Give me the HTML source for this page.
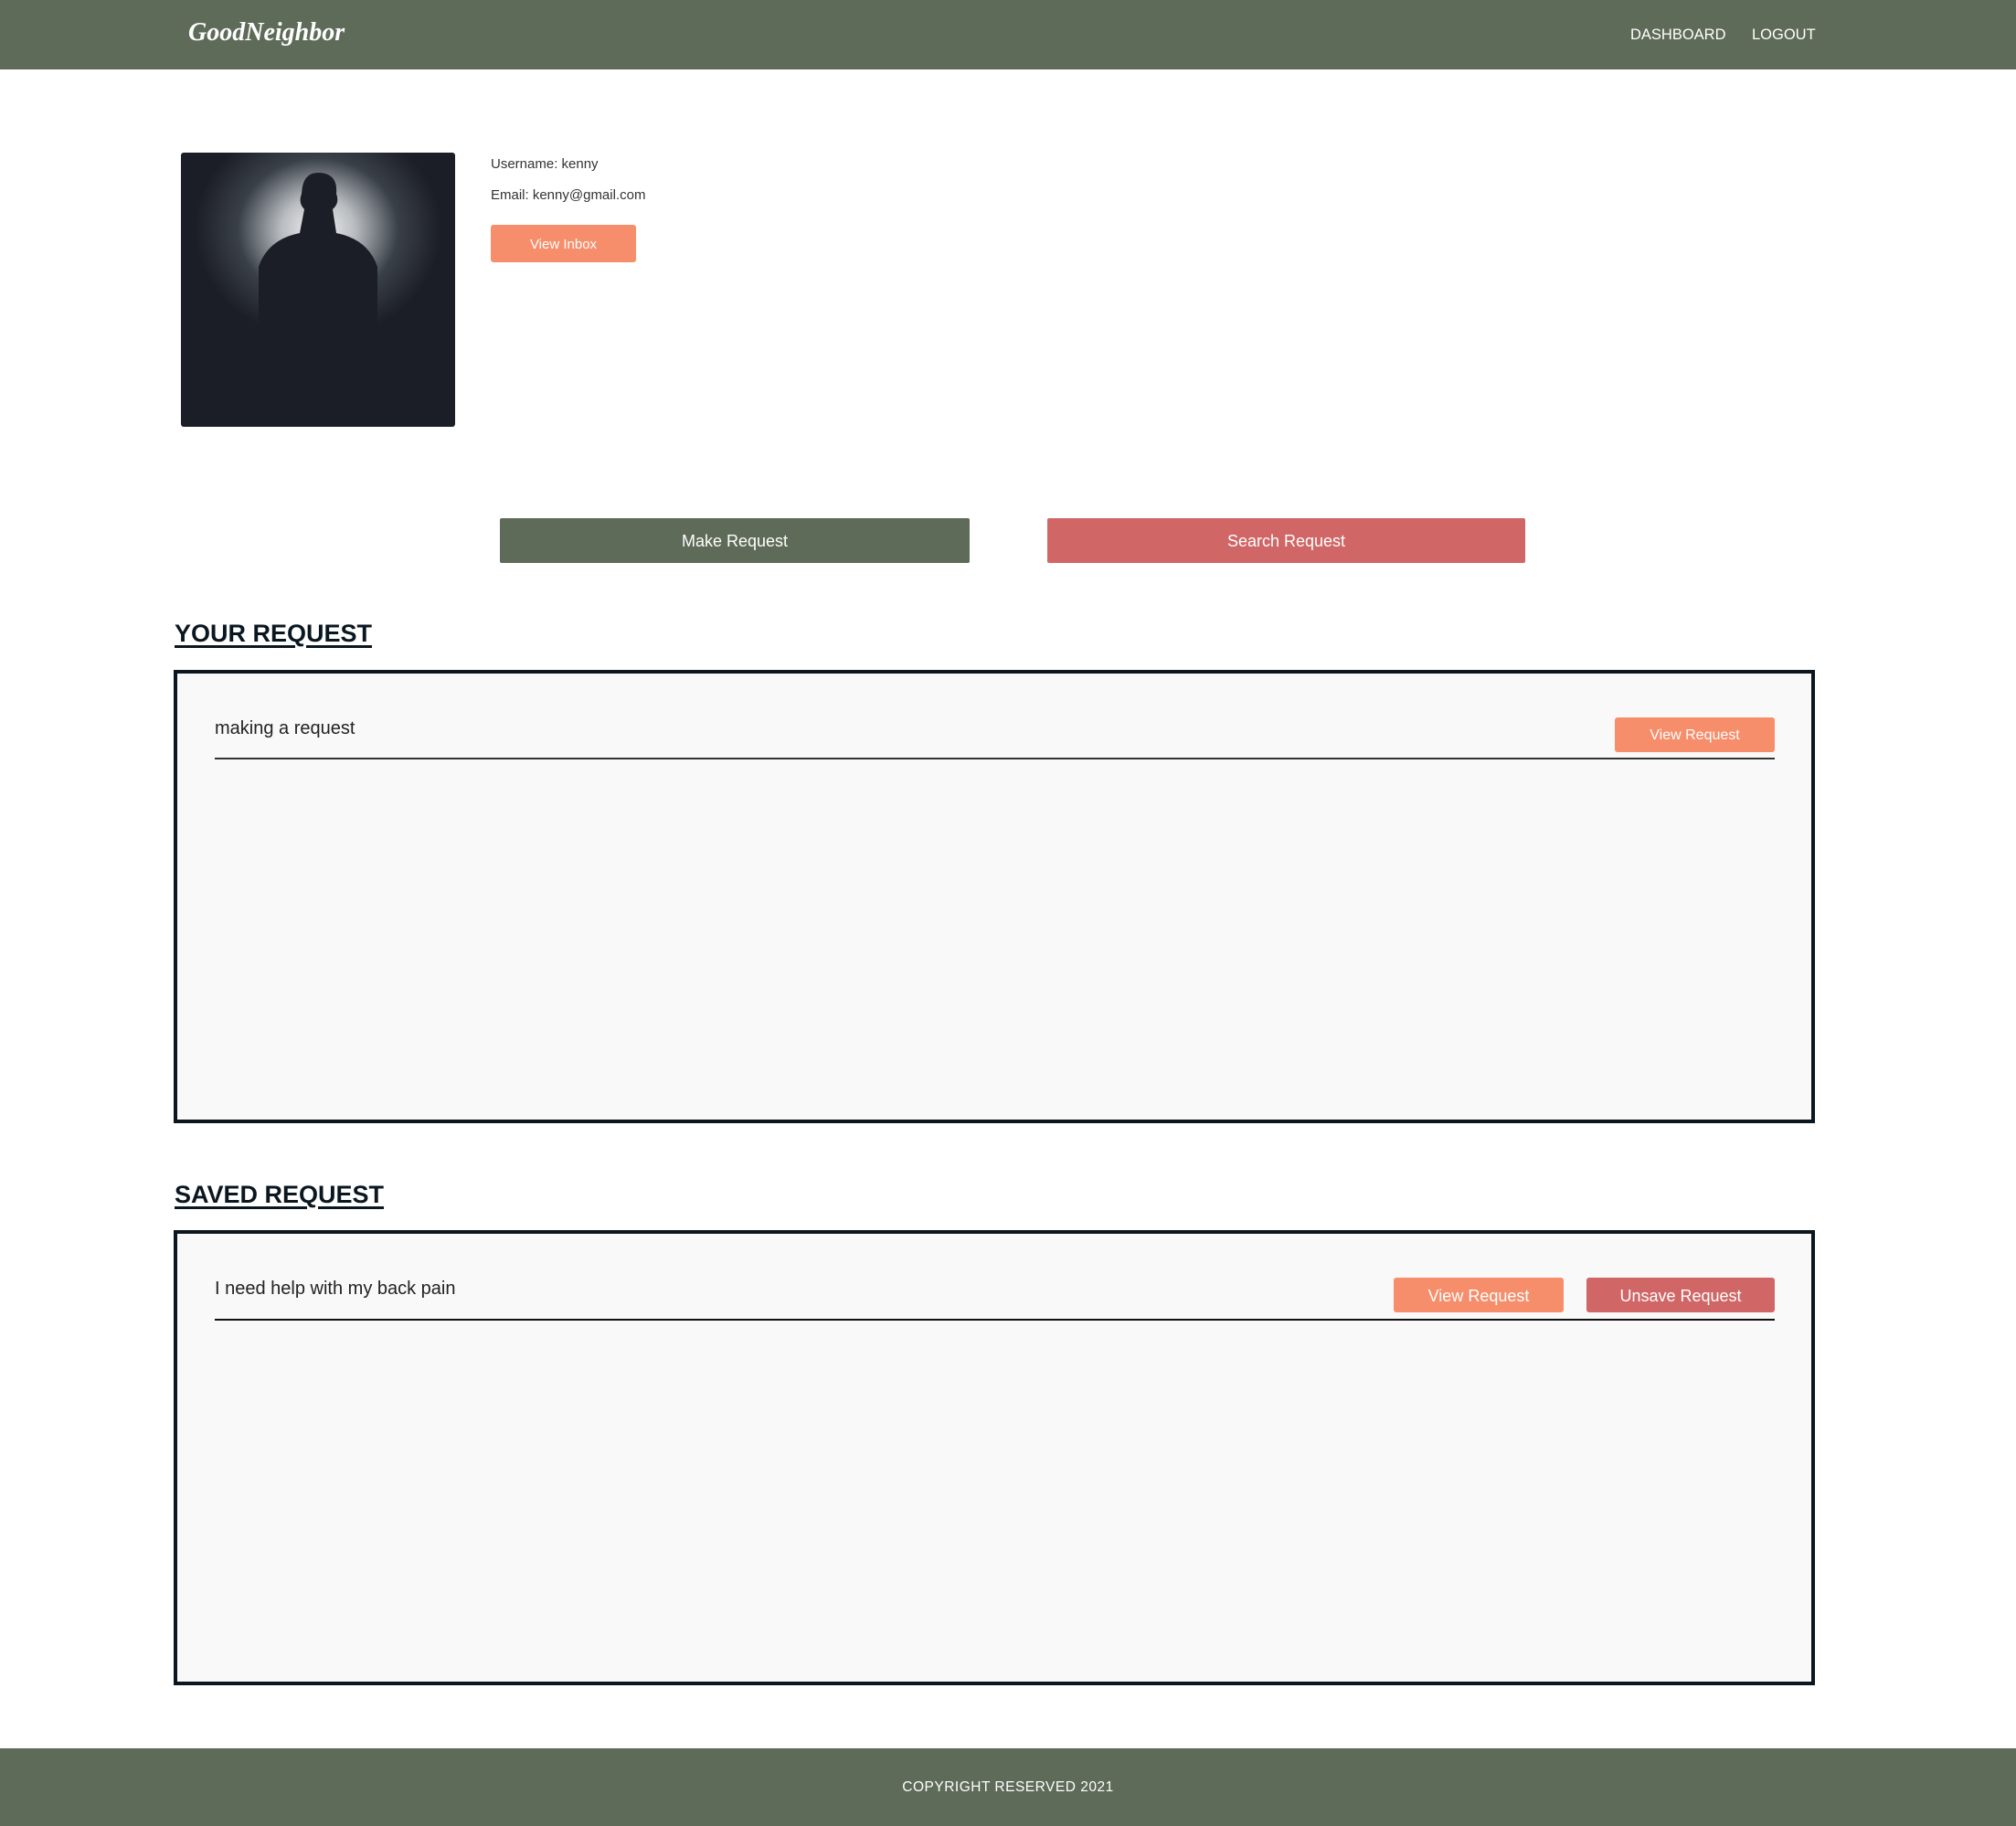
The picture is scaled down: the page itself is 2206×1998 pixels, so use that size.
<!DOCTYPE html>
<html><head><meta charset="utf-8"><style>
*{margin:0;padding:0;box-sizing:border-box}
body{width:2206px;height:1998px;position:relative;background:#fff;font-family:"Liberation Sans",sans-serif;overflow:hidden}
.a{position:absolute}
.nav{left:0;top:0;width:2206px;height:76px;background:#5f6b59}
.btn{position:absolute;color:#fff;text-align:center;border-radius:3px}
.h{font-weight:bold;font-size:27px;color:#0b1720;text-decoration:underline;text-decoration-thickness:3px;text-underline-offset:4px}
.box{border:4px solid #0b1720;background:#f9f9f9}
</style></head><body>
<div class="a nav"></div>
<div class="a" style="left:206px;top:20px;font-family:'Liberation Serif',serif;font-style:italic;font-weight:bold;font-size:28px;color:#fff">GoodNeighbor</div>
<div class="a" style="left:1784px;top:29px;font-size:16.5px;color:#fff">DASHBOARD</div>
<div class="a" style="left:1917px;top:29px;font-size:16.5px;color:#fff">LOGOUT</div>

<div class="a" style="left:198px;top:167px;width:300px;height:300px;border-radius:3px;overflow:hidden;background:radial-gradient(ellipse 45% 40% at 50% 28%,#f4f4f4 0%,#b8bcc0 30%,#3a4048 65%,#1b1d27 100%)">
<svg width="300" height="300" viewBox="0 0 300 300"><path d="M85 300 L85 125 Q95 95 130 88 L135 62 Q128 55 132 45 Q133 22 150 22 Q172 22 170 45 Q174 55 166 62 L170 88 Q205 95 215 125 L215 300 Z" fill="#1b1d27"/></svg>
</div>
<div class="a" style="left:537px;top:171px;font-size:15px;color:#333">Username: kenny</div>
<div class="a" style="left:537px;top:205px;font-size:15px;color:#333">Email: kenny@gmail.com</div>
<div class="btn" style="left:537px;top:246px;width:159px;height:41px;line-height:43px;background:#f78e6b;font-size:15px">View Inbox</div>

<div class="btn" style="left:547px;top:567px;width:514px;height:49px;line-height:51px;background:#5f6b59;font-size:18px;border-radius:2px">Make Request</div>
<div class="btn" style="left:1146px;top:567px;width:523px;height:49px;line-height:51px;background:#d06666;font-size:18px;border-radius:2px">Search Request</div>

<div class="a h" style="left:191px;top:678px">YOUR REQUEST</div>
<div class="a box" style="left:190px;top:733px;width:1796px;height:496px"></div>
<div class="a" style="left:235px;top:786px;font-size:20px;color:#222">making a request</div>
<div class="btn" style="left:1767px;top:785px;width:175px;height:38px;line-height:40px;background:#f78e6b;font-size:16px">View Request</div>
<div class="a" style="left:235px;top:829px;width:1707px;height:2px;background:#333"></div>

<div class="a h" style="left:191px;top:1292px">SAVED REQUEST</div>
<div class="a box" style="left:190px;top:1346px;width:1796px;height:498px"></div>
<div class="a" style="left:235px;top:1399px;font-size:20px;color:#222">I need help with my back pain</div>
<div class="btn" style="left:1525px;top:1398px;width:186px;height:38px;line-height:40px;background:#f78e6b;font-size:18px">View Request</div>
<div class="btn" style="left:1736px;top:1398px;width:206px;height:38px;line-height:40px;background:#d06666;font-size:18px">Unsave Request</div>
<div class="a" style="left:235px;top:1443px;width:1707px;height:2px;background:#111"></div>

<div class="a" style="left:0;top:1913px;width:2206px;height:85px;background:#5f6b59"></div>
<div class="a" style="left:0;top:1947px;width:2206px;text-align:center;font-size:15.5px;color:#fff;letter-spacing:0.5px">COPYRIGHT RESERVED 2021</div>
</body></html>
